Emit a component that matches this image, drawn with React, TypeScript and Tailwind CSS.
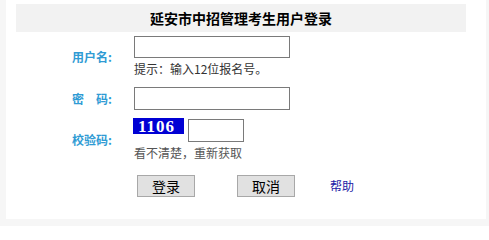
import React from 'react'

const labelCls =
  'w-[118px] shrink-0 pl-[56px] text-[12px] font-bold text-[#2f9bd4] leading-none'

const App: React.FC = () => {
  return (
    <div
      className="h-[226px] w-[489px] bg-[#f6f6f6]"
      style={{ fontFamily: '"Noto Sans CJK SC", "Liberation Sans", sans-serif' }}
    >
      <div className="ml-[6px] h-[219px] w-[480px] bg-white pl-[10px] pt-[4px]">
        <div className="flex h-[28px] w-[450px] items-center justify-center bg-[#f2f2f2] text-[14px] font-bold text-black">
          延安市中招管理考生用户登录
        </div>

        {/* 用户名 */}
        <div className="mt-[4px] flex items-center">
          <div className={labelCls}>用户名:</div>
          <div className="flex flex-col">
            <input
              type="text"
              className="h-[22px] w-[156px] border border-[#7a7a7a] bg-white outline-none"
            />
            <span className="mt-[2px] text-[12px] leading-[18px] text-[#333]">
              提示：输入12位报名号。
            </span>
          </div>
        </div>

        {/* 密码 */}
        <div className="mt-[9px] flex items-center">
          <div className={labelCls}>
            密<span className="inline-block w-[12px]" />码:
          </div>
          <input
            type="password"
            className="h-[23px] w-[156px] border border-[#7a7a7a] bg-white outline-none"
          />
        </div>

        {/* 校验码 */}
        <div className="mt-[8px] flex items-center">
          <div className={labelCls}>校验码:</div>
          <div className="flex flex-col">
            <div className="flex items-start">
              <span
                className="ml-[-1px] flex h-[16px] w-[51px] items-center pl-[5px] text-[17px] font-bold text-white bg-[#0000d4] leading-none tracking-[1px]"
                style={{ fontFamily: '"Liberation Serif", serif' }}
              >
                1106
              </span>
              <input
                type="text"
                className="ml-[4px] mt-[1px] h-[23px] w-[56px] border border-[#7a7a7a] bg-white outline-none"
              />
            </div>
            <span className="mt-[2px] text-[12px] leading-[18px] text-[#555]">
              看不清楚，重新获取
            </span>
          </div>
        </div>

        {/* 按钮 */}
        <div className="mt-[13px] flex items-center pl-[121px]">
          <button className="h-[22px] w-[58px] border border-[#a8a8a8] bg-[#e1e1e1] text-[14px] leading-none text-black">
            登录
          </button>
          <button className="ml-[42px] h-[22px] w-[58px] border border-[#a8a8a8] bg-[#e1e1e1] text-[14px] leading-none text-black">
            取消
          </button>
          <a className="ml-[35px] text-[12px] text-[#1c1ca6]" href="#">
            帮助
          </a>
        </div>
      </div>
    </div>
  )
}

export default App
